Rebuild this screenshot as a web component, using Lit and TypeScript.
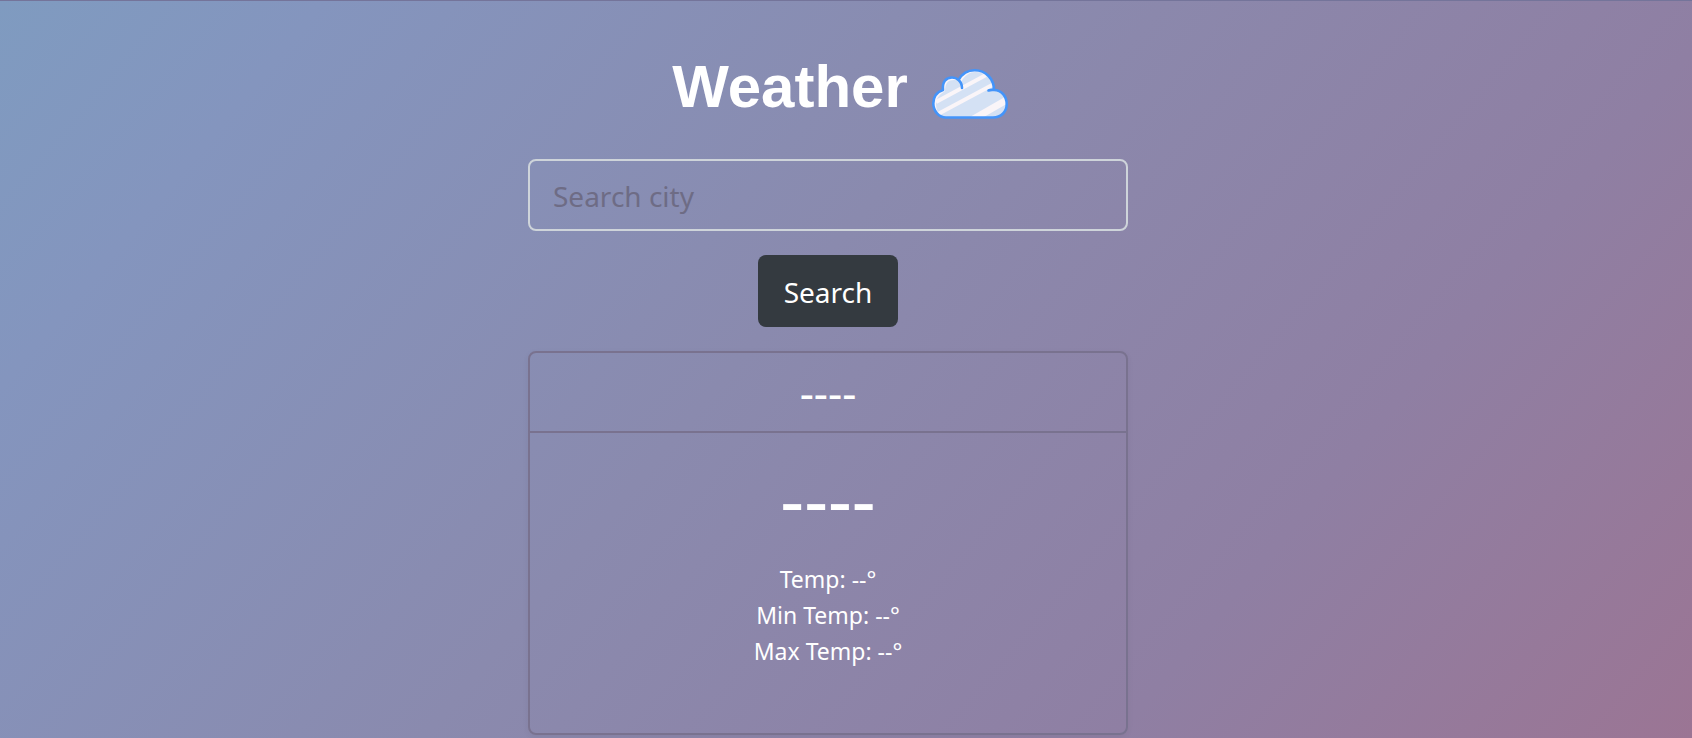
import { LitElement, html, css } from "lit";
import { customElement, state } from "lit/decorators.js";

@customElement("app-root")
export class AppRoot extends LitElement {
  static styles = css`
    :host {
      display: block;
      box-sizing: border-box;
      min-height: 100vh;
      padding-right: 36px;
      border-top: 1px solid #74749a;
      background: linear-gradient(130deg, #7f9bc0 0%, #8495be 14%, #8a8aae 45%, #8f7fa3 75%, #9b7594 100%);
      color: #fff;
      font-family: "Segoe UI", "Noto Sans", sans-serif;
      font-size: 23px;
      line-height: 36px;
    }
    *, *::before, *::after { box-sizing: border-box; }
    main {
      width: 100%;
      max-width: 600px;
      margin: 0 auto;
      padding: 50px 0 2px;
      display: flex;
      flex-direction: column;
      align-items: center;
      gap: 24px;
    }
    .title {
      display: flex;
      align-items: center;
      gap: 24px;
      margin: 0 0 12px;
      padding-left: 24px;
      font: bold 60px/72px "Liberation Sans", Arial, sans-serif;
    }
    .cloud { width: 76px; height: 50px; margin-top: 14px; display: block; }
    form {
      width: 100%;
      display: flex;
      flex-direction: column;
      align-items: center;
      gap: 24px;
    }
    .field, .submit {
      height: 72px;
      border-radius: 8px;
      color: #fff;
      font: 28px/44px "Segoe UI", "Noto Sans", sans-serif;
    }
    .field {
      width: 100%;
      padding: 2px 23px 0;
      border: 2px solid #ced4da;
      background: transparent;
      outline: none;
    }
    .field::placeholder { color: #6e6c85; opacity: 1; }
    .submit {
      padding: 2px 26px 0;
      border: 0;
      background: #343a40;
    }
    .card {
      width: 100%;
      border: 2px solid #79728f;
      border-radius: 8px;
      box-shadow: 0 2px 6px rgb(0 0 0 / 5%);
      text-align: center;
    }
    .city {
      padding: 17px 24px;
      border-bottom: 2px solid #79728f;
      font-size: 44px;
      line-height: 44px;
    }
    .body { padding: 36px 24px 64px; }
    .weather {
      margin: 0 0 32px;
      font-size: 74px;
      line-height: 60px;
      font-weight: 400;
    }
    ul { margin: 0; padding: 0; list-style: none; }
  `;

  @state() private city = "----";
  @state() private weather = "----";
  @state() private readings = [
    { label: "Temp", value: "--" },
    { label: "Min Temp", value: "--" },
    { label: "Max Temp", value: "--" },
  ];

  private onSubmit(event: Event) {
    event.preventDefault();
  }

  render() {
    return html`
      <main>
        <h1 class="title">
          Weather
          <svg class="cloud" viewBox="0 0 76 50" aria-hidden="true">
            <defs>
              <clipPath id="shape">
                <path
                  d="M14 48.5C7 48.5 1.3 42 1.3 34.5C1.3 28 5 23 11 21C10 13 14 8.5 20 8.5C23 8.5 25 9.5 26.5 11C30 5 36 1.3 42.5 1.3C54 1.3 62 10 62 21C70 21 74.7 28 74.7 35C74.7 43 69 48.5 61 48.5Z"
                />
              </clipPath>
            </defs>
            <g clip-path="url(#shape)" fill="none">
              <path fill="#faf5f8" d="M0 0h76v50H0z" />
              <path
                fill="#d4e1f4"
                d="M14 49C7 47 4 41 4 35C4 29 8 25 13 22C13 14 16 11 22 11C26 11 28 12 29 13C33 6 38 3 43 3C54 3 62 11 62 21C70 21 75 28 75 35C75 43 69 49 61 49Z"
              />
              <path stroke="#faf5f8" stroke-width="4" d="M4 33L54 6M6 45L62 15" />
              <path stroke="#faf5f8" stroke-width="7" d="M38 52L78 29" />
            </g>
            <path
              fill="none"
              stroke="#4394fa"
              stroke-width="2.6"
              stroke-linecap="round"
              stroke-linejoin="round"
              d="M14 48.5C7 48.5 1.3 42 1.3 34.5C1.3 28 5 23 11 21C10 13 14 8.5 20 8.5C23 8.5 25 9.5 26.5 11C30 5 36 1.3 42.5 1.3C54 1.3 62 10 62 21C70 21 74.7 28 74.7 35C74.7 43 69 48.5 61 48.5ZM26.5 11Q30 14 30 19M56.5 21.5Q59 20.5 62 21"
            />
          </svg>
        </h1>
        <form @submit=${this.onSubmit}>
          <input
            class="field"
            type="text"
            aria-label="Search city"
            placeholder="Search city"
            autocomplete="off"
          />
          <button class="submit" type="submit">Search</button>
        </form>
        <section class="card">
          <div class="city">${this.city}</div>
          <div class="body">
            <h2 class="weather">${this.weather}</h2>
            <ul>
              ${this.readings.map((r) => html`<li>${r.label}: ${r.value}°</li>`)}
            </ul>
          </div>
        </section>
      </main>
    `;
  }
}
